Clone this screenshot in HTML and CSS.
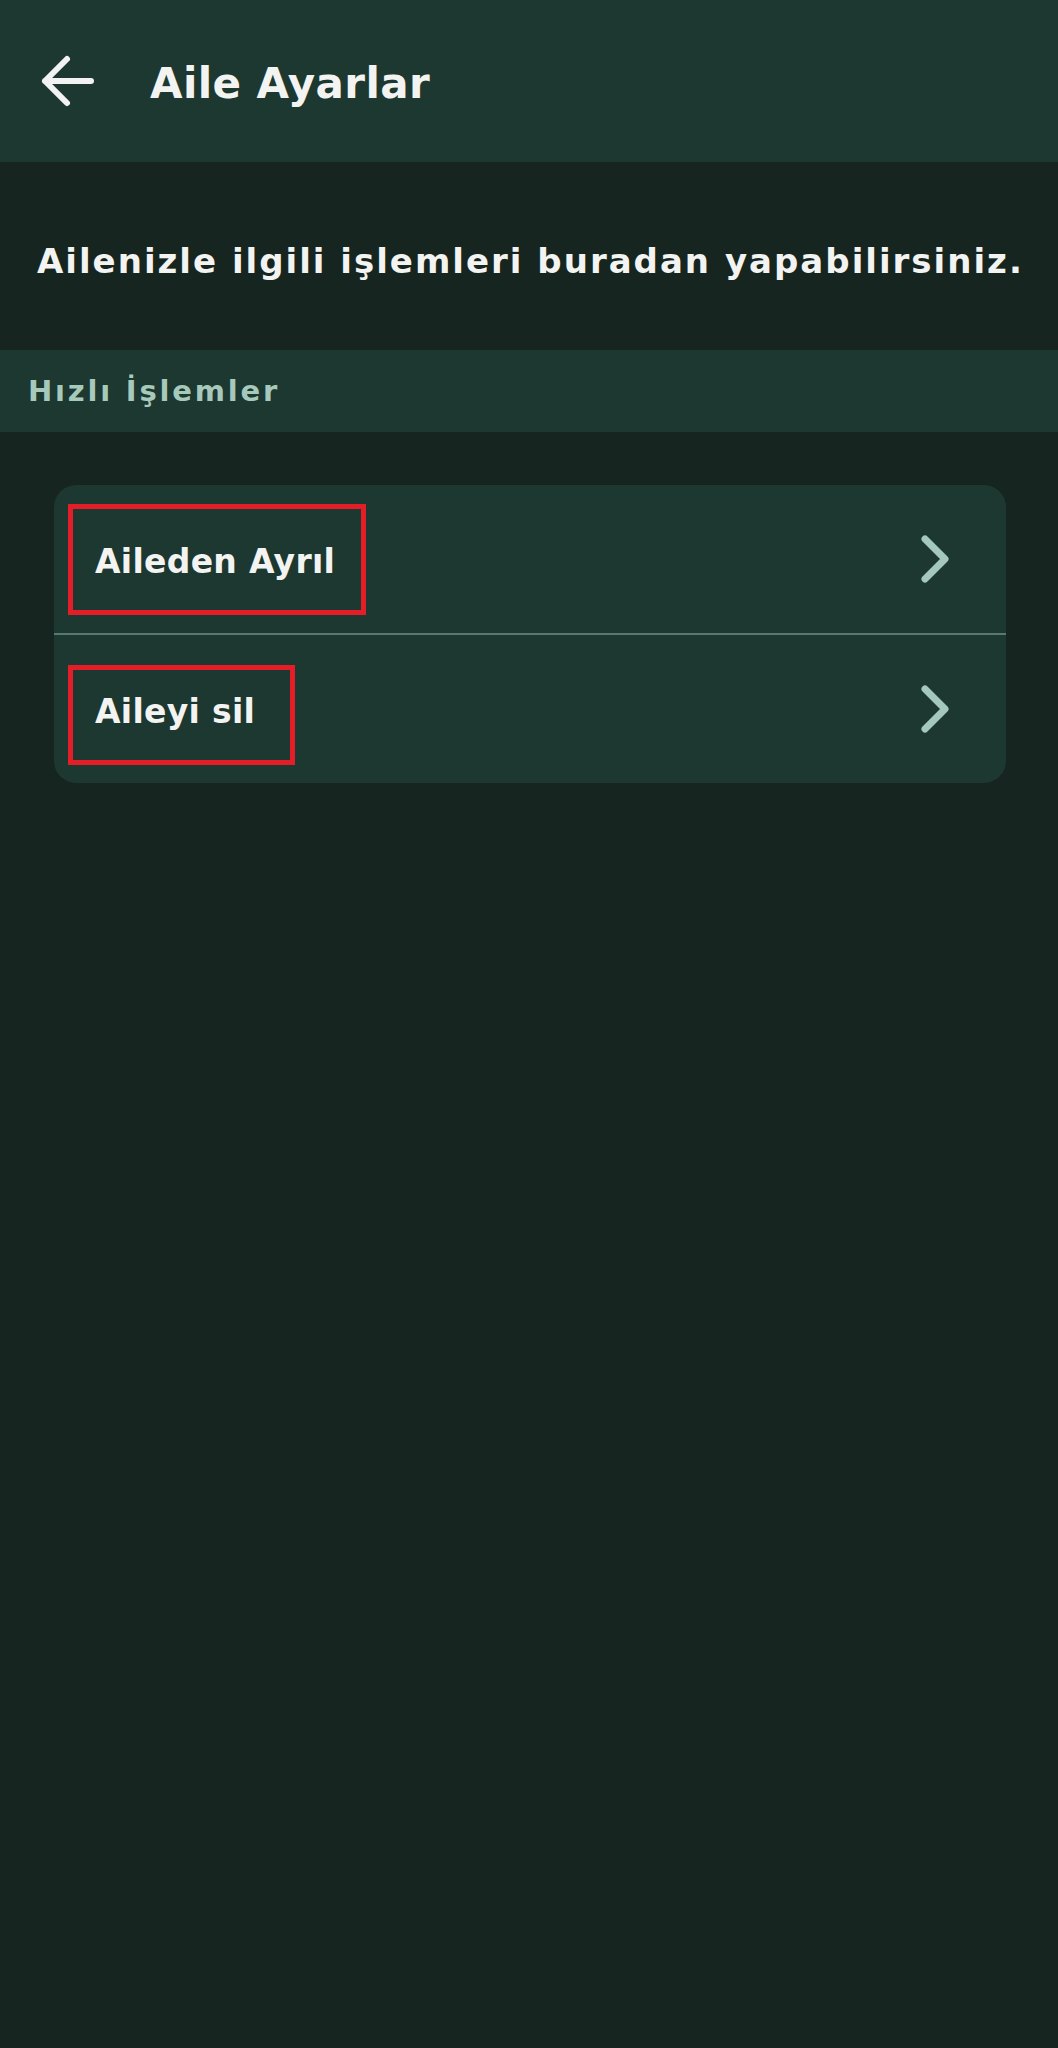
FILE: index.html
```html
<!DOCTYPE html>
<html lang="tr">
<head>
<meta charset="utf-8">
<title>Aile Ayarlar</title>
<link rel="stylesheet" href="styles.css">
</head>
<body>
<header class="topbar">
  <svg class="back" viewBox="0 0 54 54" width="54" height="54" aria-hidden="true">
    <path d="M51 27H5M27 5L5 27L27 49" fill="none" stroke="#f2f2f2" stroke-width="6" stroke-linecap="round" stroke-linejoin="round"/>
  </svg>
  <h1 class="title">Aile Ayarlar</h1>
</header>
<section class="intro">
  <p class="intro-text">Ailenizle ilgili işlemleri buradan yapabilirsiniz.</p>
</section>
<div class="section-band">
  <span class="section-label">Hızlı İşlemler</span>
</div>
<main class="content">
  <div class="card">
    <div class="row">
      <span class="row-label">Aileden Ayrıl</span>
      <svg class="chev" viewBox="0 0 30 50" width="30" height="50" aria-hidden="true">
        <path d="M5 5L25 25L5 45" fill="none" stroke="#a4c9bc" stroke-width="7" stroke-linecap="round" stroke-linejoin="round"/>
      </svg>
      <span class="mark mark-1"></span>
    </div>
    <div class="divider"></div>
    <div class="row">
      <span class="row-label">Aileyi sil</span>
      <svg class="chev" viewBox="0 0 30 50" width="30" height="50" aria-hidden="true">
        <path d="M5 5L25 25L5 45" fill="none" stroke="#a4c9bc" stroke-width="7" stroke-linecap="round" stroke-linejoin="round"/>
      </svg>
      <span class="mark mark-2"></span>
    </div>
  </div>
</main>
</body>
</html>
```
FILE: styles.css
```css
* { box-sizing: border-box; }
html, body {
  margin: 0;
  padding: 0;
  background: #16251f;
  min-height: 2048px;
  font-family: "DejaVu Sans", "Noto Sans", sans-serif;
  color: #f3f3f1;
}
.topbar {
  height: 162px;
  background: #1c3830;
  display: flex;
  align-items: center;
  padding-left: 40px;
}
.back { display: block; flex: none; }
.title {
  margin: 0 0 0 56px;
  padding-top: 5px;
  font-size: 42px;
  font-weight: 700;
  letter-spacing: 0.4px;
  line-height: 1;
}
.intro {
  height: 188px;
  display: flex;
  align-items: center;
  padding: 10px 0 0 37px;
}
.intro-text {
  margin: 0;
  font-size: 34px;
  font-weight: 700;
  letter-spacing: 2px;
  line-height: 1;
}
.section-band {
  height: 82px;
  background: #1c3830;
  display: flex;
  align-items: center;
  padding-left: 28px;
}
.section-label {
  font-size: 29px;
  font-weight: 700;
  letter-spacing: 2.8px;
  color: #a7c9bc;
  line-height: 1;
}
.content {
  padding: 53px 52px 0 54px;
}
.card {
  background: #1c3830;
  border-radius: 22px;
  overflow: hidden;
}
.row {
  position: relative;
  height: 148px;
  display: flex;
  align-items: center;
  justify-content: space-between;
  padding: 0 56px 0 41px;
}
.row-label {
  padding-top: 5px;
  font-size: 33px;
  font-weight: 700;
  letter-spacing: 0.3px;
  line-height: 1;
}
.chev { display: block; flex: none; }
.divider {
  height: 2px;
  background: #587a6d;
}
.mark {
  position: absolute;
  border: 5px solid #e41e28;
}
.mark-1 { left: 14px; top: 19px; width: 298px; height: 111px; }
.mark-2 { left: 14px; top: 30px; width: 227px; height: 100px; }
```
